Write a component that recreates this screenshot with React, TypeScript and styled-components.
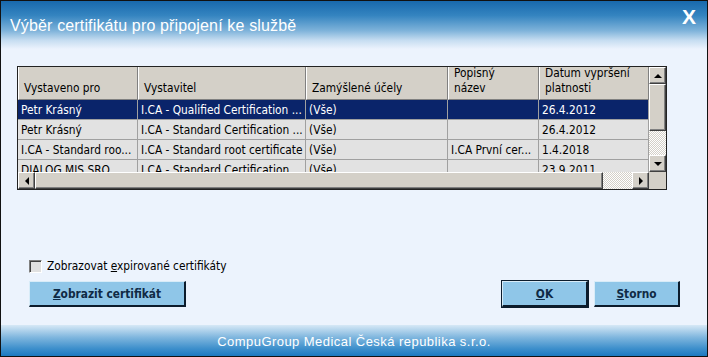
import React from "react";
import styled, { createGlobalStyle } from "styled-components";

const COLUMNS = [
    { title: "Vystaveno pro", width: 120 },
    { title: "Vystavitel", width: 168 },
    { title: "Zamýšlené účely", width: 142 },
    { title: "Popisný\nnázev", width: 91 },
    { title: "Datum vypršení\nplatnosti", width: 110 },
];

const ROWS = [
    ["Petr Krásný", "I.CA - Qualified Certification ...", "(Vše)", "", "26.4.2012"],
    ["Petr Krásný", "I.CA - Standard Certification ...", "(Vše)", "", "26.4.2012"],
    ["I.CA - Standard roo...", "I.CA - Standard root certificate", "(Vše)", "I.CA První cer...", "1.4.2018"],
    ["DIALOG MIS SRO...", "I.CA - Standard Certification ...", "(Vše)", "", "23.9.2011"],
];

const App: React.FC = () => {
    return (
        <>
            <GlobalStyle />
            <Window>
                <TitleBar>
                    <Title>Výběr certifikátu pro připojení ke službě</Title>
                    <CloseButton>X</CloseButton>
                </TitleBar>
                <Body>
                    <ListBox>
                        <ListArea>
                            <HeaderRow>
                                {COLUMNS.map((col, i) => (
                                    <HeaderCell key={i} style={{ width: col.width }}>
                                        {col.title}
                                    </HeaderCell>
                                ))}
                            </HeaderRow>
                            {ROWS.map((row, r) => (
                                <Row key={r} selected={r === 0}>
                                    {row.map((cell, c) => (
                                        <Cell key={c} style={{ width: COLUMNS[c].width }}>
                                            {cell}
                                        </Cell>
                                    ))}
                                </Row>
                            ))}
                        </ListArea>
                        <VScroll>
                            <ArrowButton>
                                <Triangle dir="up" />
                            </ArrowButton>
                            <VThumb />
                            <Track />
                            <ArrowButton>
                                <Triangle dir="down" />
                            </ArrowButton>
                        </VScroll>
                        <HScroll>
                            <ArrowButton>
                                <Triangle dir="left" />
                            </ArrowButton>
                            <HThumb />
                            <Track />
                            <ArrowButton>
                                <Triangle dir="right" />
                            </ArrowButton>
                        </HScroll>
                        <Corner />
                    </ListBox>
                    <CheckRow>
                        <CheckBox />
                        <span>
                            Zobrazovat <u>e</u>xpirované certifikáty
                        </span>
                    </CheckRow>
                    <ButtonRow>
                        <DialogButton style={{ width: 157 }}>
                            <u>Z</u>obrazit certifikát
                        </DialogButton>
                        <Spacer />
                        <DialogButton isDefault>
                            <u>O</u>K
                        </DialogButton>
                        <DialogButton>
                            <u>S</u>torno
                        </DialogButton>
                    </ButtonRow>
                </Body>
                <Footer>CompuGroup Medical Česká republika s.r.o.</Footer>
            </Window>
        </>
    );
};

interface RowProps {
    selected?: boolean;
}

interface ButtonProps {
    isDefault?: boolean;
}

interface TriangleProps {
    dir: "up" | "down" | "left" | "right";
}

const GlobalStyle = createGlobalStyle`
    html, body {
        margin: 0;
        padding: 0;
        background: #ecf3fd;
    }
    * {
        box-sizing: border-box;
    }
`;

const Window = styled.div`
    width: 708px;
    height: 357px;
    border: 1px solid #111;
    background: #ecf3fd;
    display: flex;
    flex-direction: column;
    font-family: "Liberation Sans", Arial, sans-serif;
    overflow: hidden;
`;

const TitleBar = styled.div`
    height: 48px;
    flex: none;
    display: flex;
    justify-content: space-between;
    align-items: flex-start;
    padding: 0 11px 0 9px;
    background: linear-gradient(
        to bottom,
        #1869ad 0%,
        #3484c0 30%,
        #7fb3da 62%,
        #c6ddf1 82%,
        #ecf3fd 100%
    );
`;

const Title = styled.div`
    margin-top: 16px;
    color: #fff;
    font-size: 16px;
    letter-spacing: 0.15px;
`;

const CloseButton = styled.div`
    margin-top: 4px;
    color: #fff;
    font-size: 21px;
    font-weight: bold;
`;

const Body = styled.div`
    flex: 1;
    display: flex;
    flex-direction: column;
    padding: 17px 27px 0 16px;
`;

const ListBox = styled.div`
    width: 650px;
    height: 124px;
    border: 1px solid #222;
    background: #d4d0c8;
    display: grid;
    grid-template-columns: 1fr 17px;
    grid-template-rows: 1fr 17px;
    font-family: "DejaVu Sans Condensed", "Liberation Sans", sans-serif;
    font-size: 11.8px;
`;

const ListArea = styled.div`
    overflow: hidden;
    background: #e2e2e2;
`;

const HeaderRow = styled.div`
    display: flex;
    height: 33px;
    background: #d4d0c8;
`;

const HeaderCell = styled.div`
    flex: none;
    display: flex;
    align-items: flex-end;
    padding: 0 5px 3px;
    white-space: pre-line;
    line-height: 15px;
    color: #000;
    border-left: 1px solid #fff;
    border-right: 1px solid #808080;
    border-bottom: 1px solid #808080;
`;

const Row = styled.div<RowProps>`
    display: flex;
    height: 20px;
    background: ${({ selected }) => (selected ? "#0a246a" : "#e2e2e2")};
    color: ${({ selected }) => (selected ? "#fff" : "#000")};
`;

const Cell = styled.div`
    flex: none;
    display: flex;
    align-items: center;
    padding: 0 3px;
    white-space: nowrap;
    overflow: hidden;
    border-right: 1px solid #a0a0a0;
    border-bottom: 1px solid #a0a0a0;
`;

const VScroll = styled.div`
    display: flex;
    flex-direction: column;
`;

const HScroll = styled.div`
    display: flex;
`;

const Track = styled.div`
    flex: 1;
    background: repeating-conic-gradient(#d4d0c8 0 25%, #fff 0 50%) 0 0 / 2px 2px;
`;

const Raised = styled.div`
    background: #d4d0c8;
    border-top: 1px solid #fff;
    border-left: 1px solid #fff;
    border-right: 1px solid #404040;
    border-bottom: 1px solid #404040;
    box-shadow: inset -1px -1px 0 #808080;
`;

const ArrowButton = styled(Raised)`
    flex: none;
    width: 17px;
    height: 17px;
    display: flex;
    align-items: center;
    justify-content: center;
`;

const VThumb = styled(Raised)`
    flex: none;
    height: 47px;
`;

const HThumb = styled(Raised)`
    flex: none;
    width: 568px;
`;

const Corner = styled.div`
    background: #d4d0c8;
`;

const Triangle = styled.div<TriangleProps>`
    width: 0;
    height: 0;
    ${({ dir }) =>
        dir === "up"
            ? "border-left: 4px solid transparent; border-right: 4px solid transparent; border-bottom: 4px solid #000;"
            : dir === "down"
            ? "border-left: 4px solid transparent; border-right: 4px solid transparent; border-top: 4px solid #000;"
            : dir === "left"
            ? "border-top: 4px solid transparent; border-bottom: 4px solid transparent; border-right: 4px solid #000;"
            : "border-top: 4px solid transparent; border-bottom: 4px solid transparent; border-left: 4px solid #000;"}
`;

const CheckRow = styled.div`
    display: flex;
    align-items: center;
    gap: 5px;
    margin-top: 69px;
    margin-left: 12px;
    font-family: "DejaVu Sans Condensed", "Liberation Sans", sans-serif;
    font-size: 11.8px;
    color: #000;
`;

const CheckBox = styled.div`
    width: 13px;
    height: 13px;
    background: #e0e0e0;
    border-top: 1px solid #808080;
    border-left: 1px solid #808080;
    border-right: 1px solid #fff;
    border-bottom: 1px solid #fff;
    box-shadow: inset 1px 1px 0 #404040;
`;

const ButtonRow = styled.div`
    display: flex;
    gap: 6px;
    margin-top: 8px;
    margin-left: 12px;
`;

const Spacer = styled.div`
    flex: 1;
`;

const DialogButton = styled.div<ButtonProps>`
    width: 86px;
    height: 26px;
    display: flex;
    align-items: center;
    justify-content: center;
    background: #8fc6e8;
    color: #0f2a45;
    font-family: "DejaVu Sans Condensed", "Liberation Sans", sans-serif;
    font-size: 11.8px;
    font-weight: bold;
    border-top: 1px solid #d8ecf8;
    border-left: 1px solid #d8ecf8;
    border-right: 2px solid #0c1c2c;
    border-bottom: 2px solid #0c1c2c;
    ${({ isDefault }) => isDefault && "outline: 1px solid #0c1c2c;"}
`;

const Footer = styled.div`
    height: 31px;
    flex: none;
    display: flex;
    align-items: center;
    justify-content: center;
    padding-top: 2px;
    color: #fff;
    font-size: 13px;
    letter-spacing: 0.45px;
    background: linear-gradient(to bottom, #d6e8f6 0%, #7fb6de 40%, #3f90cc 75%, #1c79c0 100%);
`;

export default App;
